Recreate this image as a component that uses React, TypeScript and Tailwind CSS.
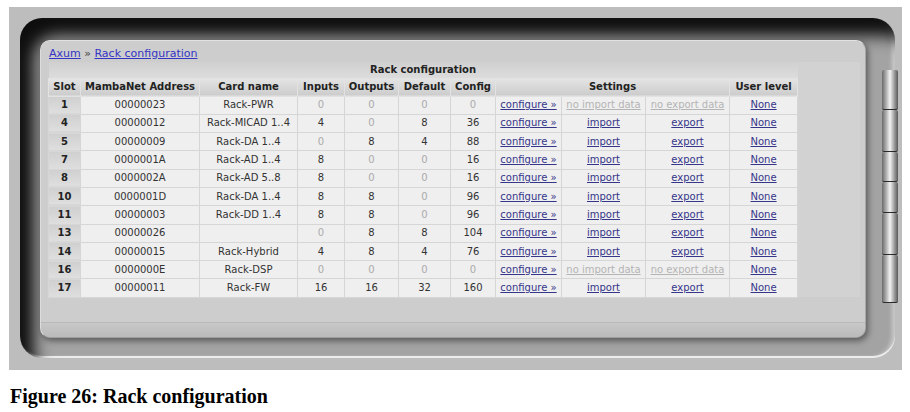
import React from "react";

type Row = {
  slot: string;
  addr: string;
  card: string;
  nums: number[];
  data: boolean;
};

const rows: Row[] = [
  { slot: "1", addr: "00000023", card: "Rack-PWR", nums: [0, 0, 0, 0], data: false },
  { slot: "4", addr: "00000012", card: "Rack-MICAD 1..4", nums: [4, 0, 8, 36], data: true },
  { slot: "5", addr: "00000009", card: "Rack-DA 1..4", nums: [0, 8, 4, 88], data: true },
  { slot: "7", addr: "0000001A", card: "Rack-AD 1..4", nums: [8, 0, 0, 16], data: true },
  { slot: "8", addr: "0000002A", card: "Rack-AD 5..8", nums: [8, 0, 0, 16], data: true },
  { slot: "10", addr: "0000001D", card: "Rack-DA 1..4", nums: [8, 8, 0, 96], data: true },
  { slot: "11", addr: "00000003", card: "Rack-DD 1..4", nums: [8, 8, 0, 96], data: true },
  { slot: "13", addr: "00000026", card: "", nums: [0, 8, 8, 104], data: true },
  { slot: "14", addr: "00000015", card: "Rack-Hybrid", nums: [4, 8, 4, 76], data: true },
  { slot: "16", addr: "0000000E", card: "Rack-DSP", nums: [0, 0, 0, 0], data: false },
  { slot: "17", addr: "00000011", card: "Rack-FW", nums: [16, 16, 32, 160], data: true },
];

const widths = [32, 119, 98, 47, 54, 52, 45, 66, 84, 84, 68];
const segments = [40, 42, 30, 31, 42, 48];

function Link({ children, dim }: { children: React.ReactNode; dim?: boolean }) {
  return (
    <span className={dim ? "underline text-[#b4b4b4]" : "underline text-[#35358a]"}>
      {children}
    </span>
  );
}

export default function App() {
  const th =
    "h-[18px] border border-[#e2e2e2] bg-gradient-to-b from-[#e4e4e4] to-[#cccccc] font-bold text-[#222] p-0";
  const td = "h-[18px] border border-[#d6d6d6] bg-[#efefef] text-center p-0";

  return (
    <div className="w-[910px] h-[412px] bg-white pt-[7px] pl-[9px] overflow-hidden">
      {/* textured frame */}
      <div className="relative w-[893px] h-[363px] bg-[#bdbdbd] pt-[11px] pl-[11px] pr-[7px] pb-[12px]">
        {/* dark bezel */}
        <div className="h-full rounded-[22px] bg-[#a3a3a3] pt-[22px] pl-[20px] pr-[29px] pb-[20px] shadow-[inset_14px_18px_16px_rgba(0,0,0,0.92),inset_0_-2px_0_#ededed,inset_-3px_0_4px_rgba(255,255,255,0.5)]">
          {/* panel */}
          <div className="h-full rounded-[10px] bg-[#c6c6c6] border border-t-[#e2e2e2] border-l-[#dcdcdc] border-r-[#a8a8a8] border-b-[#9e9e9e] flex flex-col overflow-hidden shadow-[2px_3px_6px_rgba(0,0,0,0.45)]">
            <div className="flex-1 bg-[#cdcdcd] border-b border-[#b9b9b9] pl-[7px] pr-[5px] pt-[5px] font-['DejaVu_Sans',Verdana,sans-serif] text-[10px]">
              <div className="h-[16px] leading-[16px] text-[11px] text-[#444] pl-[1px]">
                <span className="underline text-[#3434c4]">Axum</span>
                <span> » </span>
                <span className="underline text-[#3434c4]">Rack configuration</span>
              </div>
              <div className="flex">
                <table className="table-fixed border-collapse w-[749px] leading-none">
                  <colgroup>
                    {widths.map((w, i) => (
                      <col key={i} style={{ width: w }} />
                    ))}
                  </colgroup>
                  <thead>
                    <tr>
                      <th
                        colSpan={11}
                        className="h-[16px] bg-gradient-to-b from-[#d0d0d0] to-[#dcdcdc] font-bold text-[#222] p-0"
                      >
                        Rack configuration
                      </th>
                    </tr>
                    <tr>
                      <th className={th}>Slot</th>
                      <th className={th}>MambaNet Address</th>
                      <th className={th}>Card name</th>
                      <th className={th}>Inputs</th>
                      <th className={th}>Outputs</th>
                      <th className={th}>Default</th>
                      <th className={th}>Config</th>
                      <th className={th} colSpan={3}>
                        Settings
                      </th>
                      <th className={th}>User level</th>
                    </tr>
                  </thead>
                  <tbody>
                    {rows.map((r) => (
                      <tr key={r.slot} className="h-[18.3px]">
                        <td className="border border-[#d6d6d6] bg-gradient-to-b from-[#cfcfcf] to-[#dfdfdf] text-center font-bold text-[#222] p-0">
                          {r.slot}
                        </td>
                        <td className={td + " text-[#333]"}>{r.addr}</td>
                        <td className={td + " text-[#333]"}>{r.card}</td>
                        {r.nums.map((n, i) => (
                          <td key={i} className={td + (n === 0 ? " text-[#ababab]" : " text-[#333]")}>
                            {n}
                          </td>
                        ))}
                        <td className={td}>
                          <Link>configure »</Link>
                        </td>
                        <td className={td}>
                          {r.data ? <Link>import</Link> : <Link dim>no import data</Link>}
                        </td>
                        <td className={td}>
                          {r.data ? <Link>export</Link> : <Link dim>no export data</Link>}
                        </td>
                        <td className={td}>
                          <Link>None</Link>
                        </td>
                      </tr>
                    ))}
                  </tbody>
                </table>
                <div className="flex-1 bg-[#d2d2d2] h-[235px]" />
              </div>
            </div>
            <div className="h-[14px] bg-gradient-to-b from-[#c8c8c8] to-[#bababa]" />
          </div>
        </div>

        {/* metal side buttons */}
        <div className="absolute right-[4px] top-[63px] w-[16px] flex flex-col">
          {segments.map((h, i) => (
            <div
              key={i}
              style={{ height: h }}
              className="border-b border-[#2a2a2a] bg-gradient-to-r from-[#6a6a6a] via-[#f4f4f4] to-[#5a5a5a] rounded-[2px]"
            />
          ))}
        </div>
      </div>

      <div className="mt-[15px] pl-[1px] font-['Liberation_Serif',serif] font-bold text-[20px] leading-[22px] text-black">
        Figure 26: Rack configuration
      </div>
    </div>
  );
}
